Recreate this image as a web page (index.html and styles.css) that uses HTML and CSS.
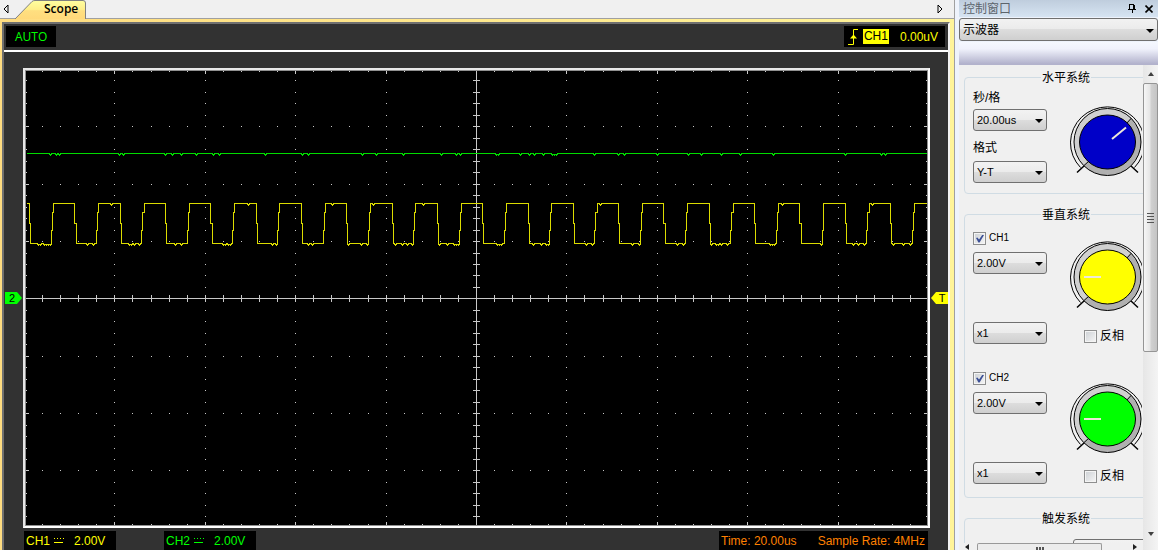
FILE: index.html
```html
<!DOCTYPE html>
<html lang="zh-CN">
<head>
<meta charset="utf-8">
<title>Scope</title>
<link rel="stylesheet" href="styles.css">
</head>
<body>
<svg width="0" height="0" class="defs" aria-hidden="true">
  <symbol id="dial" viewBox="0 0 72 72">
    <circle cx="37.5" cy="36" r="33.5" fill="#d0d0d0"/>
    <path d="M61.200 12.300A33.500 33.500 0 0 1 13.800 59.700Z" fill="#b0b0b0"/>
    <path d="M7 66.500L14 60M61 60L68 66.500" stroke="#000" stroke-width="1.500"/>
    <path d="M10.500 61.500A37 36 0 1 1 64.500 61.500" fill="none" stroke="#000"/>
    <circle cx="37.500" cy="36" r="33.500" fill="none" stroke="#000"/>
    <path d="M56 18L61.200 12.300M13.800 59.700L19 55" stroke="#000"/>
    <ellipse cx="37.500" cy="36" rx="28" ry="27" fill="currentColor" stroke="#000"/>
  </symbol>
</svg>

<main class="workspace">
  <nav class="tabs">
    <button class="tab-arrow" aria-label="Previous"><svg width="6" height="10" viewBox="0 0 6 10"><path d="M5 1V9L1 5Z" fill="none" stroke="#000"/></svg></button>
    <button class="tab">
      <svg class="tab-shape" viewBox="0 0 72 19" width="72" height="19">
        <defs><linearGradient id="tabfill" x2="0" y2="1"><stop offset="0" stop-color="#ffffa0"/><stop offset=".5" stop-color="#ffee88"/><stop offset=".55" stop-color="#ffdf80"/><stop offset="1" stop-color="#ffd97a"/></linearGradient></defs>
        <path d="M0 19L17 1.500Q18 .5 20 .5H68Q70.500 .5 70.500 3V19" fill="url(#tabfill)" stroke="#808080"/>
      </svg>
      <span class="tab-name">Scope</span>
    </button>
    <button class="tab-arrow next" aria-label="Next"><svg width="6" height="10" viewBox="0 0 6 10"><path d="M1 1V9L5 5Z" fill="none" stroke="#000"/></svg></button>
  </nav>
  <div class="frame">
    <section class="scope">
      <header class="status">
        <span class="readout auto">AUTO</span>
        <span class="readout trigger">
          <svg width="12" height="18" viewBox="0 0 12 18"><path d="M1 16.500H6.500V1.500H11" fill="none" stroke="#ff0"/><path d="M3 10.500H10L6.500 6.500Z" fill="#ff0"/></svg>
          <b class="source">CH1</b><span>0.00uV</span>
        </span>
      </header>
      <div class="stage">
        <div class="gutter"><svg width="18" height="12" viewBox="0 0 18 12"><path d="M1 0H13L18 6L13 12H1Z" fill="#0f0"/><text x="8" y="10" text-anchor="middle" class="marker">2</text></svg></div>
        <div class="screen"><svg id="plot" viewBox="0 0 901 454" preserveAspectRatio="none" shape-rendering="crispEdges"></svg></div>
        <div class="gutter right"><svg width="17" height="12" viewBox="0 0 17 12"><path d="M17 0H5L0 6L5 12H17Z" fill="#ff0"/><text x="11" y="10" text-anchor="middle" class="marker">T</text></svg></div>
      </div>
      <footer class="readings">
        <span class="readout ch1">CH1<svg width="11" height="7" viewBox="0 0 11 7" shape-rendering="crispEdges"><path d="M1 1.500H11" stroke="currentColor" stroke-dasharray="1 2"/><path d="M1 5.500H10" stroke="currentColor"/></svg><span>2.00V</span></span>
        <span class="readout ch2">CH2<svg width="11" height="7" viewBox="0 0 11 7" shape-rendering="crispEdges"><path d="M1 1.500H11" stroke="currentColor" stroke-dasharray="1 2"/><path d="M1 5.500H10" stroke="currentColor"/></svg><span>2.00V</span></span>
        <span class="readout timing"><span>Time: 20.00us</span><span>Sample Rate: 4MHz</span></span>
      </footer>
    </section>
  </div>
</main>

<aside class="control">
  <header class="title"><span>控制窗口</span>
    <button class="tool" aria-label="Pin"><svg width="8" height="9" viewBox="0 0 8 9" shape-rendering="crispEdges"><path d="M1.500 5V.5H6M5.500 0V5M0 5.500H8M4 6V9" fill="none" stroke="#000"/><path d="M5 1H6.500V5H5Z"/></svg></button>
    <button class="tool" aria-label="Close"><svg width="8" height="8" viewBox="0 0 8 8"><path d="M.5 .5L7.500 7.500M7.500 .5L.5 7.500" stroke="#000" stroke-width="1.600"/></svg></button>
  </header>
  <div class="combo device"><select aria-label="设备"><option>示波器</option></select></div>
  <div class="band"></div>
  <div class="body">
    <div class="view">
      <div class="pane">
        <fieldset class="group horizontal">
          <legend>水平系统</legend>
          <div class="fields">
            <label for="tdiv">秒/格</label>
            <div class="combo"><select id="tdiv"><option>20.00us</option></select></div>
            <label for="fmt">格式</label>
            <div class="combo"><select id="fmt"><option>Y-T</option></select></div>
          </div>
          <svg class="knob blue" viewBox="0 0 72 72"><use href="#dial"/><path d="M42 33L56 21.500" stroke="#eee8d8" stroke-width="2"/></svg>
        </fieldset>
        <fieldset class="group vertical">
          <legend>垂直系统</legend>
          <div class="channel">
            <div class="fields">
              <label class="check"><input type="checkbox" checked>CH1</label>
              <div class="combo"><select aria-label="CH1 V"><option>2.00V</option></select></div>
              <div class="combo probe"><select aria-label="CH1 x"><option>x1</option></select></div>
            </div>
            <div class="turn">
              <svg class="knob yellow" viewBox="0 0 72 72"><use href="#dial"/><path d="M14 36H31" stroke="#eee8d8" stroke-width="2"/></svg>
              <label class="check invert"><input type="checkbox">反相</label>
            </div>
          </div>
          <div class="channel">
            <div class="fields">
              <label class="check"><input type="checkbox" checked>CH2</label>
              <div class="combo"><select aria-label="CH2 V"><option>2.00V</option></select></div>
              <div class="combo probe"><select aria-label="CH2 x"><option>x1</option></select></div>
            </div>
            <div class="turn">
              <svg class="knob green" viewBox="0 0 72 72"><use href="#dial"/><path d="M14 36H31" stroke="#eee8d8" stroke-width="2"/></svg>
              <label class="check invert"><input type="checkbox">反相</label>
            </div>
          </div>
        </fieldset>
        <fieldset class="group">
          <legend>触发系统</legend>
          <div class="combo source-pick"><select aria-label="触发"></select></div>
        </fieldset>
      </div>
      <div class="hscroll"><i class="arrow left"></i><div class="hthumb"><i></i><i></i><i></i></div><i class="arrow rightward"></i></div>
    </div>
    <div class="vscroll"><i class="arrow up"></i><div class="vthumb"><i></i><i></i><i></i><i></i></div><i class="arrow down"></i></div>
  </div>
</aside>
<script src="scope.js"></script>
</body>
</html>
```
FILE: styles.css
```css
* { box-sizing: border-box; }
html, body { height: 100%; }
body {
  margin: 0;
  display: flex;
  overflow: hidden;
  background: #eef3fc;
  color: #000;
  font: 12px/16px "Liberation Sans", "Noto Sans CJK SC", sans-serif;
}
button { padding: 0; border: 0; background: none; font: inherit; }
svg { display: block; flex: none; }
.defs { position: absolute; }

.workspace {
  flex: 1;
  min-width: 0;
  display: flex;
  flex-direction: column;
  border-right: 1px solid #a0a0a0;
}
.tabs {
  display: flex;
  height: 19px;
  padding: 0 11px 0 3px;
  background: #f0f0f0;
  border-bottom: 1px solid #a0a0a0;
}
.tab-arrow { display: flex; align-items: center; height: 17px; }
.next { margin-left: auto; }
.tab { display: grid; margin-left: 6px; }
.tab-shape, .tab-name { grid-area: 1 / 1; }
.tab-name {
  padding-left: 29px;
  text-align: left;
  font: 600 12px/18px "Open Sans", sans-serif;
}
.frame {
  flex: 1;
  min-height: 0;
  display: flex;
  padding: 3px 4px 0 2px;
  background: linear-gradient(90deg, #ffdc80, #fff49a);
}
.scope {
  flex: 1;
  min-width: 0;
  display: flex;
  flex-direction: column;
  background: #323232;
  border: 2px solid #707070;
  border-right-color: #f4f4f4;
  border-bottom: 0;
}
.status {
  display: flex;
  justify-content: space-between;
  height: 28px;
  padding: 2px 3px 3px 2px;
  border-bottom: 2px solid #fff;
}
.readout { display: flex; align-items: center; background: #000; }
.auto {
  padding: 0 9px;
  color: #0f0;
  font: 12px/20px "Open Sans", sans-serif;
}
.trigger { gap: 4px; padding: 0 7px 0 3px; color: #ff0; }
.source { background: #ff0; color: #000; font-weight: normal; line-height: 15px; padding: 0 1px; }
.trigger span { margin-left: 7px; }
.stage { flex: 1; min-height: 0; display: flex; padding-top: 16px; }
.gutter { flex: 0 0 19px; display: flex; align-items: center; }
.right { flex-basis: 18px; justify-content: flex-end; }
.marker { font: 11px "Liberation Sans", sans-serif; }
.screen {
  flex: 1;
  min-width: 0;
  background: #000;
  border: 2px solid #e8e8e8;
  border-right-color: #fff;
  border-bottom-color: #fff;
  outline: 1px solid #909090;
  outline-offset: -3px;
  padding: 1px;
}
.screen svg { width: 100%; height: 100%; }
.readings { display: flex; gap: 48px; height: 22px; padding: 3px 20px 0; }
.ch1, .ch2 { width: 92px; padding-left: 2px; }
.ch1 { color: #ff0; }
.ch2 { color: #0f0; }
.readings svg { margin: 0 10px 0 3px; }
.timing { gap: 21px; margin-left: auto; padding: 0 3px 0 2px; color: #ff8000; }

.control {
  flex: 0 0 203px;
  display: flex;
  flex-direction: column;
  padding-left: 4px;
  overflow: hidden;
}
.title {
  display: flex;
  align-items: center;
  gap: 9px;
  height: 17px;
  padding: 0 5px 0 4px;
  background: linear-gradient(#bfcddd, #d6e4f2);
  color: #5c646c;
}
.title span { flex: 1; line-height: 14px; }
.combo { position: relative; }
.combo::after {
  content: "";
  position: absolute;
  right: 4px;
  top: 50%;
  border: 4px solid transparent;
  border-top-color: #000;
  border-bottom: 0;
  margin-top: -1px;
  pointer-events: none;
}
select {
  display: block;
  appearance: none;
  width: 100%;
  height: 22px;
  padding: 0 3px;
  border: 1px solid #707070;
  border-radius: 3px;
  background: linear-gradient(#f2f2f2, #ebebeb 50%, #dddddd 50%, #cfcfcf);
  color: #000;
  font: 11px "Liberation Sans", "Noto Sans CJK SC", sans-serif;
}
.device { margin: 1px 0; }
.device select { height: 23px; font-size: 12px; }
.band { height: 23px; background: linear-gradient(#f5f8ff, #f0f2fc 30%, #b2b2cc 95%); }
.body { flex: 1; min-height: 0; display: flex; background: #f0f0f0; }
.view { flex: 1; min-width: 0; display: flex; flex-direction: column; overflow: hidden; }
.pane { flex: 1; min-height: 0; overflow: hidden; padding: 3px 0 0 5px; }
.group {
  width: 204px;
  min-width: 0;
  margin: 0 0 11px;
  padding: 0 8px 10px;
  border: 1px solid #d0dce4;
  border-radius: 4px;
}
.group legend { margin: 0 auto; padding: 2px 1px 0; }
.horizontal, .channel { display: flex; gap: 23px; }
.fields { display: flex; flex-direction: column; width: 74px; }
.horizontal label { margin-top: 4px; height: 19px; }
.horizontal .combo + label { margin-top: 9px; height: 21px; }
.horizontal .knob { margin-top: 20px; }
.knob { width: 72px; height: 72px; }
.blue { color: #0000c8; }
.yellow { color: #ff0; }
.green { color: #0f0; }
.vertical { padding-bottom: 1px; }
.channel { height: 140px; padding-top: 7px; }
.vertical .channel:last-child { height: 133px; }
.check { display: flex; align-items: center; gap: 3px; height: 16px; font-size: 10px; }
.channel .fields .check { margin-bottom: 6px; }
.probe { margin-top: 48px; }
.invert { margin: 15px 0 0 14px; font-size: 12px; }
.turn { padding-top: 11px; }
.channel:last-child .turn { padding-top: 13px; }
.channel:last-child .invert { margin-top: 13px; }
input {
  appearance: none;
  flex: none;
  width: 13px;
  height: 13px;
  margin: 0;
  padding: 2px;
  border: 1px solid #8e8f8f;
  background: linear-gradient(135deg, #ccd0d4, #f6f6f6);
  box-shadow: inset 0 0 0 1px #f4f4f4;
}
input:checked::before {
  content: "";
  display: block;
  width: 8px;
  height: 8px;
  background: #3c5096;
  clip-path: polygon(0 45%, 18% 38%, 38% 62%, 82% 0, 100% 6%, 45% 100%, 30% 100%);
}
.source-pick { width: 90px; margin: 12px 0 0 100px; }

.hscroll {
  display: flex;
  align-items: flex-end;
  height: 7px;
  padding: 0 6px 0 6px;
  overflow: hidden;
  background: #f0f0f0;
}
.hthumb {
  display: flex;
  justify-content: center;
  gap: 1px;
  width: 125px;
  height: 7px;
  margin: 0 auto 0 8px;
  padding-top: 3px;
  border: 1px solid #999;
  border-bottom: 0;
  border-radius: 2px 2px 0 0;
  background: #ececec;
}
.hthumb i { width: 2px; background: #555; }
.vscroll {
  flex: 0 0 15px;
  display: flex;
  flex-direction: column;
  align-items: center;
  padding: 7px 0 14px;
  background: linear-gradient(90deg, #e6e6e6, #f4f4f4);
}
.vthumb {
  display: flex;
  flex-direction: column;
  align-items: center;
  justify-content: center;
  gap: 2px;
  width: 100%;
  height: 58%;
  margin: 7px 0 auto;
  border: 1px solid #959595;
  border-radius: 2px;
  background: linear-gradient(90deg, #f6f6f6, #e6e6e6 45%, #d0d0d0 55%, #c4c4c4);
}
.vthumb i { width: 7px; height: 1px; background: #555; }
.arrow { flex: none; width: 0; height: 0; border: 3px solid transparent; }
.up { border-bottom: 4px solid #404040; border-top: 0; }
.down { border-top: 4px solid #404040; border-bottom: 0; }
.left { border-right: 4px solid #202020; border-left: 0; }
.rightward { border-left: 4px solid #202020; border-right: 0; }
```
FILE: scope.js
```js
const OX = 26, OY = 71, W = 901, H = 454;
const plot = document.getElementById("plot");

function rects(list, fill) {
  const d = list.map(([x, y, w, h]) => `M${x - OX} ${y - OY}h${w}v${h}h${-w}z`).join("");
  plot.insertAdjacentHTML("beforeend", `<path d="${d}" fill="${fill}"/>`);
}

// Graticule: 10 x 8 divisions, five minor steps in each
const ys = [80, 92, 103, 115, 126, 138, 149, 161, 172, 184, 195, 207, 218, 230, 241, 253, 264, 275, 287, 298,
  310, 321, 333, 344, 356, 367, 379, 390, 402, 413, 425, 436, 448, 459, 470, 482, 493, 505, 516];
const xs = [];
for (let i = 1; i < 50; i++) xs.push(Math.round(24 + i * 18.08));

const marks = [[OX, 298, W, 1], [476, OY, 1, H]];
xs.forEach((x, i) => {
  const major = (i + 1) % 5 === 0;
  marks.push([x, 295, 1, 7], [x, OY, 1, major ? 3 : 1], [x, OY + H - (major ? 3 : 1), 1, major ? 3 : 1]);
  ys.forEach((y, j) => {
    if (major || (j + 1) % 5 === 0) marks.push([x, y, 1, 1]);
  });
});
ys.forEach((y, j) => {
  const len = (j + 1) % 5 === 0 ? 3 : 1;
  marks.push([473, y, 7, 1], [OX, y, len, 1], [OX + W - len, y, len, 1]);
});
rects(marks, "#c8c8c8");

function dips(xs, y) {
  return xs.flatMap(x => [[x - 1, y], [x - 1, y + 1], [x, y + 1], [x, y + 2], [x + 1, y + 1], [x + 1, y]]);
}
function trace(points, color) {
  const p = points.map(([x, y]) => `${x - OX + 0.5},${y - OY + 0.5}`).join(" ");
  plot.insertAdjacentHTML("beforeend", `<polyline points="${p}" fill="none" stroke="${color}"/>`);
}

// CH2
const ch2 = [50, 56, 59, 119, 123, 165, 172, 181, 196, 213, 219, 265, 302, 308, 362, 376, 403, 441, 456, 460,
  496, 498, 520, 529, 534, 543, 552, 554, 556, 594, 618, 624, 657, 688, 701, 721, 740, 773, 845, 881, 885];
trace([[26, 153], ...dips(ch2, 153), [927, 153]], "#00dc00");

// CH1: [fall start, fall end, rise start, rise end]
const pulses = [[29, 30, 51, 53], [74, 76, 96, 98], [120, 121, 141, 144], [165, 166, 187, 189], [210, 212, 232, 234],
  [256, 257, 277, 279], [301, 302, 323, 325], [346, 347, 368, 370], [392, 393, 413, 415], [437, 438, 459, 461],
  [482, 483, 504, 506], [528, 529, 549, 551], [573, 574, 594, 597], [618, 619, 640, 642], [663, 665, 685, 687],
  [709, 710, 730, 733], [754, 755, 776, 778], [799, 801, 822, 823], [845, 846, 866, 869], [890, 891, 912, 914]];
const low = [38, 40, 44, 46, 48, 50, 87, 93, 129, 131, 134, 139, 175, 181, 223, 225, 228, 230, 272, 276, 308, 312,
  348, 361, 367, 395, 402, 407, 412, 439, 447, 454, 456, 458, 497, 499, 501, 533, 541, 546, 548, 586, 592, 632,
  639, 677, 683, 711, 716, 718, 721, 727, 770, 772, 774, 821, 853, 858, 864, 893, 903, 910];
const high = [111, 248, 332, 373, 423, 600, 782, 872];
const wave = [[26, 203]];
let last = 26;
for (const [a, b, c, d] of pulses) {
  wave.push(...dips(high.filter(x => x > last && x < a), 203));
  wave.push([a, 203], [a, 223], [b, 223], [b, 243]);
  wave.push(...dips(low.filter(x => x > b && x < c), 243));
  wave.push([c, 243], [c, 230], [c + 1, 230], [c + 1, 212], [d, 212], [d, 203]);
  last = d;
}
wave.push([927, 203]);
trace(wave, "#dcdc00");
```
